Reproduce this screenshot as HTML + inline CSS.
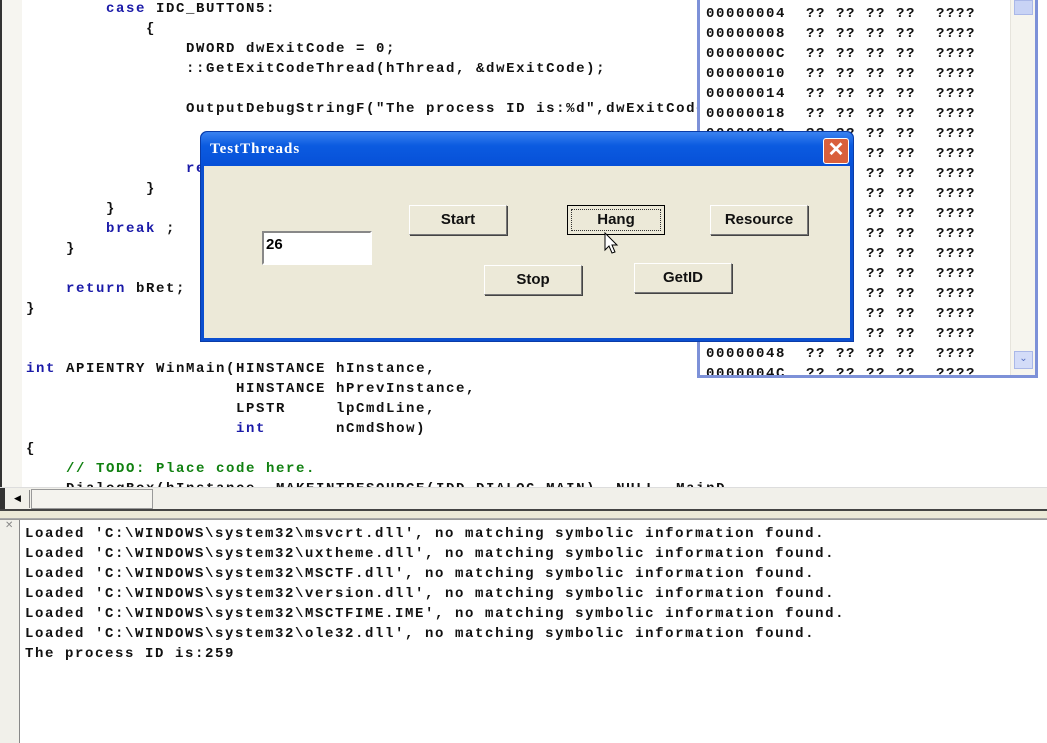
<!DOCTYPE html>
<html><head><meta charset="utf-8"><style>
*{margin:0;padding:0;box-sizing:border-box}
body{width:1047px;height:742px;overflow:hidden;background:#fff;position:relative;font-family:"Liberation Mono",monospace}
.m{font-family:"Liberation Mono",monospace;font-weight:bold;font-size:14px;letter-spacing:1.6px;white-space:pre;line-height:20px}
.k{color:#1a1aa8}.c{color:#108010}
#gut{position:absolute;left:0;top:0;width:22px;height:487px;background:#f6f5f0;border-left:2px solid #333}
#code{position:absolute;left:26px;top:-1px;width:700px;height:488px;overflow:hidden;color:#111}
#mem{position:absolute;left:697px;top:0;width:341px;height:378px;background:#fff;border:3px solid #7d91d8;border-top:none;overflow:hidden}
#mem .rows{position:absolute;left:6px;top:4px;color:#111}
#sb{position:absolute;right:0;top:0;width:25px;height:375px;background:#f6f5ee;border-left:1px solid #e6e4dc}
#hs{position:absolute;left:0;top:487px;width:1047px;height:22px;background:#f1f0ea;border-top:1px solid #ddd}
#out{position:absolute;left:0;top:519px;width:1047px;height:223px;background:#fff;border-top:1px solid #999}
#og{position:absolute;left:0;top:0;width:20px;height:223px;background:#f1f0ea;border-right:1px solid #888}
#ot{position:absolute;left:25px;top:4px;color:#111}
#dlg{position:absolute;left:200px;top:131px;width:654px;height:211px;background:#0b4fd0;border-radius:7px 7px 0 0;border:1px solid #0a3ca8}
#tb{position:absolute;left:0;top:0;right:0;height:34px;background:linear-gradient(#3a82f0,#0b5be0 40%,#0750d8);border-radius:7px 7px 0 0}
#tt{position:absolute;left:9px;top:9px;color:#fff;font:bold 15px "Liberation Serif",serif;letter-spacing:1px}
#cl{position:absolute;left:622px;top:6px;width:26px;height:26px;background:#d9603c;border:1px solid #fff;border-radius:3px;color:#fff;font:bold 20px "Liberation Sans",sans-serif;text-align:center;line-height:23px}
#bd{position:absolute;left:3px;top:34px;width:646px;height:172px;background:#ece9d8}
.b{position:absolute;width:98px;height:30px;background:#ece9d8;border:1px solid;border-color:#fff #777 #777 #fff;box-shadow:1px 1px 0 #444;font:bold 15px "Liberation Sans",sans-serif;text-align:center;line-height:27px;color:#111}
#ed{position:absolute;left:58px;top:65px;width:110px;height:34px;background:#fff;border:2px solid;border-color:#888 #fff #fff #888;font:bold 15px "Liberation Sans",sans-serif;padding:3px 2px}
</style></head><body>
<div id="gut"></div>
<div id="code" class="m"><div>        <span class="k">case</span> IDC_BUTTON5:</div><div>            {</div><div>                DWORD dwExitCode = 0;</div><div>                ::GetExitCodeThread(hThread, &amp;dwExitCode);</div><div> </div><div>                OutputDebugStringF("The process ID is:%d",dwExitCode);</div><div> </div><div> </div><div>                <span class="k">return</span> TRUE;</div><div>            }</div><div>        }</div><div>        <span class="k">break</span> ;</div><div>    }</div><div> </div><div>    <span class="k">return</span> bRet;</div><div>}</div><div> </div><div> </div><div><span class="k">int</span> APIENTRY WinMain(HINSTANCE hInstance,</div><div>                     HINSTANCE hPrevInstance,</div><div>                     LPSTR     lpCmdLine,</div><div>                     <span class="k">int</span>       nCmdShow)</div><div>{</div><div>    <span class="c">// TODO: Place code here.</span></div><div>    DialogBox(hInstance, MAKEINTRESOURCE(IDD_DIALOG_MAIN), NULL, MainDlgProc);</div></div>
<div id="mem"><div class="rows m">00000004  ?? ?? ?? ??  ????
00000008  ?? ?? ?? ??  ????
0000000C  ?? ?? ?? ??  ????
00000010  ?? ?? ?? ??  ????
00000014  ?? ?? ?? ??  ????
00000018  ?? ?? ?? ??  ????
0000001C  ?? ?? ?? ??  ????
00000020  ?? ?? ?? ??  ????
00000024  ?? ?? ?? ??  ????
00000028  ?? ?? ?? ??  ????
0000002C  ?? ?? ?? ??  ????
00000030  ?? ?? ?? ??  ????
00000034  ?? ?? ?? ??  ????
00000038  ?? ?? ?? ??  ????
0000003C  ?? ?? ?? ??  ????
00000040  ?? ?? ?? ??  ????
00000044  ?? ?? ?? ??  ????
00000048  ?? ?? ?? ??  ????
0000004C  ?? ?? ?? ??  ????</div>
<div id="sb"><div style="position:absolute;left:3px;top:0;width:19px;height:15px;background:#c8d3f5;border:1px solid #aab8e8"></div><div style="position:absolute;left:3px;bottom:6px;width:19px;height:18px;background:#d3dcf8;border:1px solid #aab8e8;color:#5570c0;font-size:10px;text-align:center;line-height:16px">&#8964;</div></div></div>
<div id="hs"><div style="position:absolute;left:0;top:0;width:5px;height:22px;background:#333"></div><div style="position:absolute;left:6px;top:2px;width:24px;height:18px;border-right:1px solid #888;font-size:9px;line-height:18px;text-align:center">&#9664;</div><div style="position:absolute;left:31px;top:1px;width:122px;height:20px;border:1px solid #999;background:#f4f3ee"></div></div>
<div style="position:absolute;left:0;top:509px;width:1047px;height:10px;background:#ece9d8;border-top:2px solid #444;border-bottom:1px solid #aaa"></div>
<div id="out"><div id="og"><div style="font:10px sans-serif;color:#888;padding-left:5px">&#10005;</div></div><div id="ot" class="m">Loaded 'C:\WINDOWS\system32\msvcrt.dll', no matching symbolic information found.
Loaded 'C:\WINDOWS\system32\uxtheme.dll', no matching symbolic information found.
Loaded 'C:\WINDOWS\system32\MSCTF.dll', no matching symbolic information found.
Loaded 'C:\WINDOWS\system32\version.dll', no matching symbolic information found.
Loaded 'C:\WINDOWS\system32\MSCTFIME.IME', no matching symbolic information found.
Loaded 'C:\WINDOWS\system32\ole32.dll', no matching symbolic information found.
The process ID is:259</div></div>
<div id="dlg"><div id="tb"><div id="tt">TestThreads</div><div id="cl">&#10005;</div></div>
<div id="bd">
<div id="ed">26</div>
<div class="b" style="left:205px;top:39px">Start</div>
<div class="b" style="left:363px;top:39px;border:1px solid #000;box-shadow:none"><div style="position:absolute;left:3px;top:3px;right:3px;bottom:3px;border:1px dotted #333"></div><span style="position:relative">Hang</span></div>
<div class="b" style="left:506px;top:39px">Resource</div>
<div class="b" style="left:280px;top:99px">Stop</div>
<div class="b" style="left:430px;top:97px">GetID</div>
<svg style="position:absolute;left:400px;top:66px" width="16" height="24" viewBox="0 0 16 24"><path d="M1 1 L1 18 L5 14 L8 21 L11 20 L8 13 L13 13 Z" fill="#fff" stroke="#000" stroke-width="1"/></svg>
</div></div>
</body></html>
